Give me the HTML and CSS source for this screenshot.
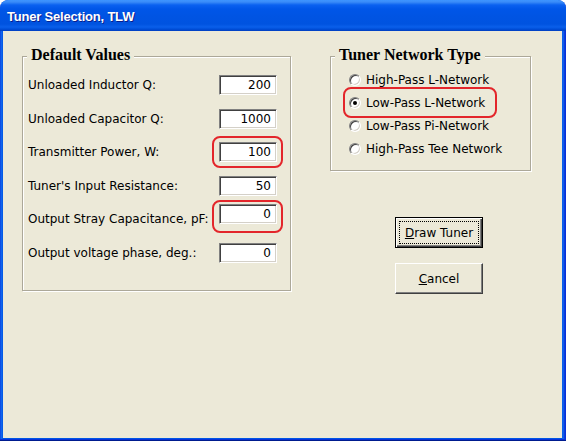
FILE: index.html
```html
<!DOCTYPE html>
<html lang="en">
<head>
<meta charset="utf-8">
<title>Tuner Selection, TLW</title>
<link rel="stylesheet" href="styles.css">
</head>
<body>
<div class="window">
  <div class="titlebar"><span class="title">Tuner Selection, TLW</span></div>
  <div class="client">
    <section class="group group--values">
      <h2 class="legend">Default Values</h2>
      <div class="rows">
        <div class="row"><span class="label">Unloaded Inductor Q:</span><span class="field">200</span></div>
        <div class="row"><span class="label">Unloaded Capacitor Q:</span><span class="field">1000</span></div>
        <div class="row"><span class="label">Transmitter Power, W:</span><span class="field field--marked">100</span></div>
        <div class="row"><span class="label">Tuner's Input Resistance:</span><span class="field">50</span></div>
        <div class="row"><span class="label">Output Stray Capacitance, pF:</span><span class="field field--raised field--marked field--marked-raised">0</span></div>
        <div class="row"><span class="label">Output voltage phase, deg.:</span><span class="field">0</span></div>
      </div>
    </section>
    <div class="side">
      <section class="group group--type">
        <h2 class="legend">Tuner Network Type</h2>
        <div class="radios">
          <div class="radio"><span class="radio__box"></span><span class="radio__text">High-Pass L-Network</span></div>
          <div class="radio radio--checked radio--marked"><span class="radio__box"></span><span class="radio__text">Low-Pass L-Network</span></div>
          <div class="radio"><span class="radio__box"></span><span class="radio__text">Low-Pass Pi-Network</span></div>
          <div class="radio"><span class="radio__box"></span><span class="radio__text">High-Pass Tee Network</span></div>
        </div>
      </section>
      <div class="buttons">
        <button class="btn btn--default" type="button"><u>D</u>raw Tuner</button>
        <button class="btn" type="button"><u>C</u>ancel</button>
      </div>
    </div>
  </div>
</div>
</body>
</html>
```
FILE: styles.css
```css
html, body {
  margin: 0;
  padding: 0;
  background: #ffffff;
}

.window {
  width: 566px;
  height: 441px;
  box-sizing: border-box;
  display: flex;
  flex-direction: column;
  background: linear-gradient(to right, #0831D9 0, #166AEE 1px, #0055E5 3px, #0055E5 562px, #166AEE 563px, #0831D9 565px);
  border-radius: 8px 8px 0 0;
  overflow: hidden;
  box-shadow: inset 0 -1px 0 #001C8F, inset 0 -2px 0 #0831D9;
}

.titlebar {
  height: 31px;
  flex: none;
  display: flex;
  align-items: center;
  padding: 2px 0 0 7px;
  box-sizing: border-box;
  background: linear-gradient(to bottom,
    #3D95FF 0, #3A8CF8 2px, #0A61F0 5px, #0056E8 9px, #0054E3 16px,
    #0053E0 24px, #0A5FEA 27px, #0050DA 29px, #003DC0 31px);
  border-radius: 8px 8px 0 0;
}

.title {
  font-family: "Liberation Sans", Arial, sans-serif;
  font-weight: bold;
  font-size: 13px;
  letter-spacing: -0.2px;
  color: #ffffff;
  text-shadow: 1px 1px 0 #0A1E8C;
}

.client {
  flex: 1;
  margin: 0 4px 3px 3px;
  background: #ECE9D8;
  padding: 25px 0 0 19px;
  display: flex;
  align-items: flex-start;
  font-family: "DejaVu Sans", Tahoma, sans-serif;
  font-size: 12px;
  color: #000;
}

.group {
  position: relative;
  box-sizing: border-box;
  border: 1px solid #ACA899;
  box-shadow: 1px 1px 0 #ffffff, inset 1px 1px 0 #ffffff;
}

.legend {
  position: absolute;
  top: -11px;
  left: 4px;
  margin: 0;
  padding: 0 4px;
  background: #ECE9D8;
  font-family: "Liberation Serif", "Times New Roman", serif;
  font-weight: bold;
  font-size: 16px;
  line-height: 18px;
  color: #000;
}

.group--values {
  width: 269px;
  height: 235px;
  flex: none;
  padding: 18px 13px 0 5px;
}

.rows {
  display: flex;
  flex-direction: column;
  gap: 13.6px;
}

.row {
  height: 20px;
  display: flex;
  align-items: center;
  justify-content: space-between;
}

.label {
  white-space: nowrap;
}

.field {
  position: relative;
  width: 58px;
  height: 20px;
  box-sizing: border-box;
  background: #ffffff;
  border: 1px solid;
  border-color: #808080 #ffffff #ffffff #808080;
  box-shadow: inset 1px 1px 0 #404040, inset -1px -1px 0 #D4D0C8;
  text-align: right;
  padding-right: 5px;
  line-height: 18px;
}

.field--raised {
  margin-bottom: 10px;
}

.field--marked::after {
  content: "";
  position: absolute;
  top: -7px;
  right: -7px;
  bottom: -7px;
  left: -8px;
  border: 2px solid #E3262B;
  border-radius: 8px;
}

.field--marked-raised::after {
  top: -5px;
  bottom: -10px;
}

.side {
  margin-left: 39px;
  width: 201px;
  display: flex;
  flex-direction: column;
}

.group--type {
  height: 115px;
  padding: 15px 0 0 18px;
}

.radios {
  display: flex;
  flex-direction: column;
  gap: 7px;
}

.radio {
  position: relative;
  height: 16px;
  display: flex;
  align-items: center;
}

.radio__box {
  position: relative;
  width: 12px;
  height: 12px;
  box-sizing: border-box;
  border-radius: 50%;
  background: #ffffff;
  border: 1px solid;
  border-color: #808080 #ffffff #ffffff #808080;
  box-shadow: inset 1px 1px 0 #404040, inset -1px -1px 0 #D4D0C8;
  margin-right: 5px;
  flex: none;
}

.radio--checked .radio__box::after {
  content: "";
  position: absolute;
  left: 3px;
  top: 3px;
  width: 4px;
  height: 4px;
  border-radius: 50%;
  background: #000;
}

.radio__text {
  white-space: nowrap;
}

.radio--marked::after {
  content: "";
  position: absolute;
  top: -8px;
  right: 33px;
  bottom: -7px;
  left: -6px;
  border: 2px solid #E3262B;
  border-radius: 8px;
}

.buttons {
  display: flex;
  flex-direction: column;
  gap: 15px;
  margin-top: 46px;
  padding-left: 65px;
}

.btn {
  width: 88px;
  height: 31px;
  box-sizing: border-box;
  padding: 0;
  margin: 0;
  background: #ECE9D8;
  border: 1px solid;
  border-color: #ffffff #404040 #404040 #ffffff;
  box-shadow: inset -1px -1px 0 #808080;
  font-family: "DejaVu Sans", Tahoma, sans-serif;
  font-size: 12px;
  color: #000;
  text-align: center;
}

.btn--default {
  border: 1px solid #000;
  box-shadow: inset 1px 1px 0 #ffffff, inset -1px -1px 0 #404040, inset -2px -2px 0 #808080;
  outline: 1px dotted #000;
  outline-offset: -5px;
}
```
